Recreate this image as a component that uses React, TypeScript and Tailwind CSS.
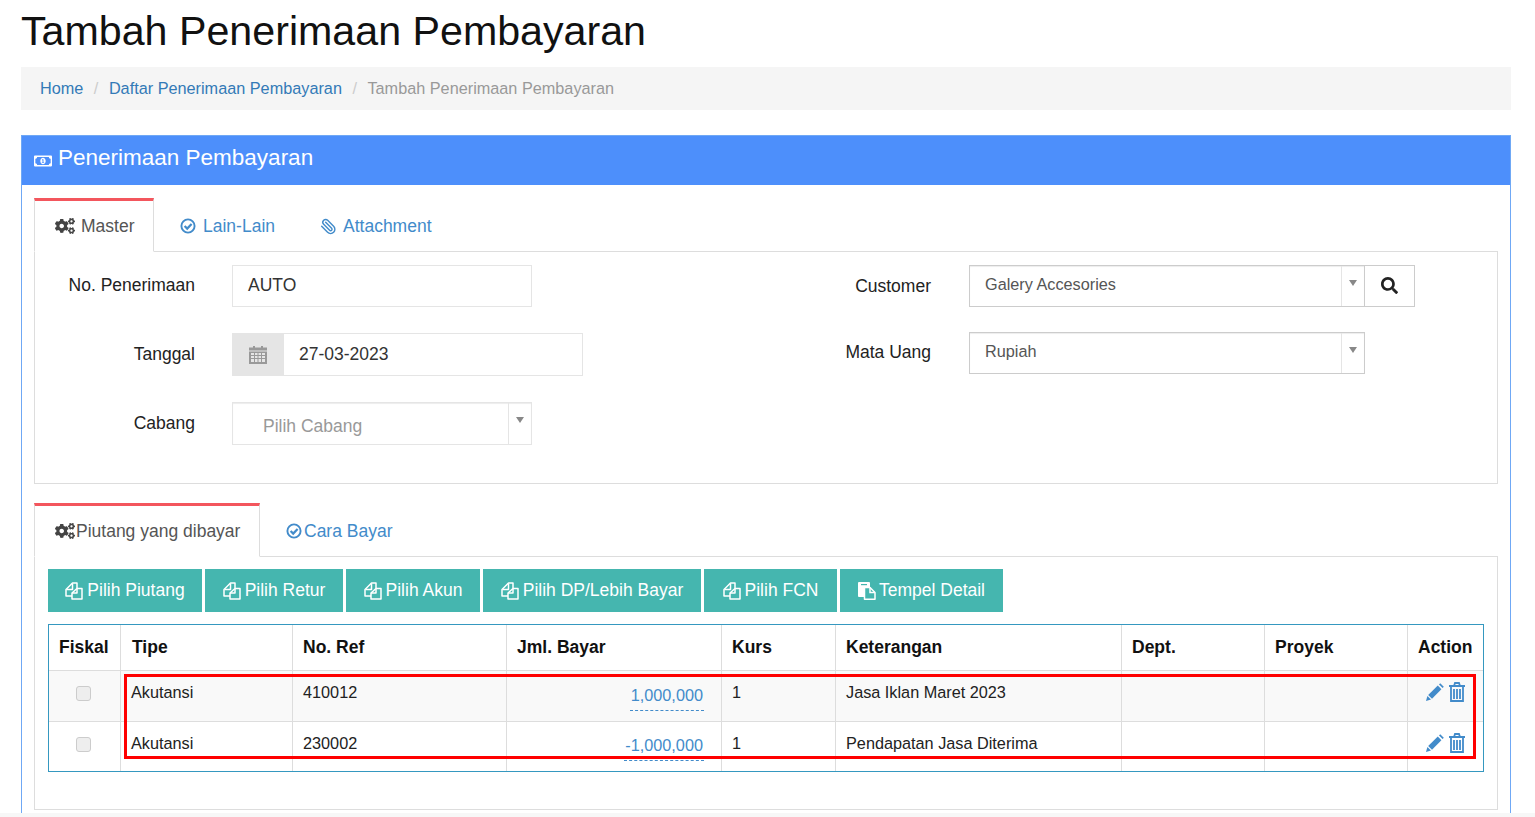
import type { ReactNode } from 'react';
import { Paperclip } from 'lucide-react';
import { FaCogs, FaRegMoneyBillAlt, FaSearch } from 'react-icons/fa';

function FilesIcon() {
  return (
    <svg viewBox="0 0 18 18" className="h-[18px] w-[18px] shrink-0" fill="none" stroke="currentColor" strokeWidth="1.5" strokeLinejoin="round" aria-hidden>
      <path d="M12 6 V1 H7.5 L1 7.5 V14 H7" />
      <path d="M7.5 1.5 V7.5 H1.5" />
      <path d="M12 6.5 H17 V17 H7 V11 Z" />
      <path d="M12 6.5 V11 H7" />
    </svg>
  );
}

function PasteIcon() {
  return (
    <svg viewBox="0 0 18 18" className="h-[18px] w-[18px] shrink-0" aria-hidden>
      <path d="M1 0 H11 A1 1 0 0 1 12 1 V15 H1 A1 1 0 0 1 0 14 V1 A1 1 0 0 1 1 0 Z" fill="#fff" />
      <rect x="3" y="2" width="6" height="1.2" fill="#45b6af" />
      <path d="M6.5 5.5 H12 L17 10.5 V17.2 H6.5 Z" fill="#45b6af" stroke="#fff" strokeWidth="1.5" strokeLinejoin="round" />
      <path d="M12 5.5 V10.5 H17" fill="none" stroke="#fff" strokeWidth="1.5" />
    </svg>
  );
}

function CheckCircleIcon() {
  return (
    <svg viewBox="0 0 16 16" className="h-[16px] w-[16px] shrink-0" fill="none" stroke="currentColor" aria-hidden>
      <circle cx="8" cy="8" r="6.6" strokeWidth="1.9" />
      <path d="M4.6 8 L7.2 10.6 L11.6 6" strokeWidth="2.2" />
    </svg>
  );
}

function CalendarIcon() {
  return (
    <svg viewBox="0 0 18 18" className="h-[18px] w-[18px]" fill="#999" aria-hidden>
      <rect x="4" y="0" width="2" height="3" />
      <rect x="12" y="0" width="2" height="3" />
      <rect x="0" y="1.5" width="18" height="3" />
      <path fillRule="evenodd" d="M0 5.5 H18 V18 H0 Z M2 7 H5 V9 H2 Z M6 7 H8.5 V9 H6 Z M9.5 7 H12 V9 H9.5 Z M13 7 H16 V9 H13 Z M2 10 H5 V12 H2 Z M6 10 H8.5 V12 H6 Z M9.5 10 H12 V12 H9.5 Z M13 10 H16 V12 H13 Z M2 13 H5 V16 H2 Z M6 13 H8.5 V16 H6 Z M9.5 13 H12 V16 H9.5 Z M13 13 H16 V16 H13 Z" />
    </svg>
  );
}

function PencilIcon() {
  return (
    <svg viewBox="0 0 18 18" className="h-[18px] w-[18px]" fill="currentColor" aria-hidden>
      <path d="M0 18 L1.4 13 L5 16.6 Z" />
      <path d="M2.2 12 L11.8 2.6 L15.4 6.2 L6 15.8 Z" />
      <path d="M13 1.4 L14.2 0.2 L17.8 3.8 L16.6 5 Z" />
    </svg>
  );
}

function TrashIcon() {
  return (
    <svg viewBox="0 0 16 20" className="h-[20px] w-[16px]" fill="none" stroke="currentColor" strokeWidth="1.8" aria-hidden>
      <path d="M0 4 H16 M5 4 L6 1 H10 L11 4" />
      <path d="M2 4.5 V19 H14 V4.5" />
      <path d="M5 7 V17 M8 7 V17 M11 7 V17" />
    </svg>
  );
}

function Caret() {
  return <span className="h-0 w-0 border-x-[4px] border-t-[6px] border-x-transparent border-t-[#888]" />;
}

function Select({ value, className, textClass }: { value: string; className: string; textClass: string }) {
  return (
    <div className={`flex shrink-0 border border-[#ccc] bg-white shadow-[inset_0_1px_1px_rgba(0,0,0,0.075)] ${className}`}>
      <div className={`flex flex-1 items-center ${textClass}`}>{value}</div>
      <div className="flex w-[23px] justify-center border-l border-[#e5e5e5] pt-[14px]">
        <Caret />
      </div>
    </div>
  );
}

function Field({ label, children, width, labelClass = '' }: { label: string; children: ReactNode; width: string; labelClass?: string }) {
  return (
    <div className="flex items-center">
      <label className={`text-right text-[17.5px] text-[#222] ${width} ${labelClass}`}>{label}</label>
      {children}
    </div>
  );
}

const buttons = [
  { label: 'Pilih Piutang', width: 'w-[154px]' },
  { label: 'Pilih Retur', width: 'w-[138px]' },
  { label: 'Pilih Akun', width: 'w-[134px]' },
  { label: 'Pilih DP/Lebih Bayar', width: 'w-[218px]' },
  { label: 'Pilih FCN', width: 'w-[133px]' },
];

const columns = ['Fiskal', 'Tipe', 'No. Ref', 'Jml. Bayar', 'Kurs', 'Keterangan', 'Dept.', 'Proyek', 'Action'];

const rows = [
  { tipe: 'Akutansi', ref: '410012', amount: '1,000,000', kurs: '1', note: 'Jasa Iklan Maret 2023', height: 'h-[51px]', amountPad: 'pt-[12px]' },
  { tipe: 'Akutansi', ref: '230002', amount: '-1,000,000', kurs: '1', note: 'Pendapatan Jasa Diterima', height: 'h-[49px]', amountPad: 'pt-[11px]' },
];

export default function App() {
  return (
    <div className="relative h-[817px] overflow-hidden bg-white pl-[21px] pr-[24px] pt-[8px] font-['Liberation_Sans',Arial,sans-serif] text-[#333]">
      <h1 className="h-[59px] text-[41.2px] leading-[46px] text-[#111]">Tambah Penerimaan Pembayaran</h1>

      <nav className="flex h-[43px] items-center gap-[10.5px] bg-[#f5f5f5] pl-[19px] text-[16.25px]">
        <a className="text-[#337ab7]">Home</a>
        <span className="text-[#ccc]">/</span>
        <a className="text-[#337ab7]">Daftar Penerimaan Pembayaran</a>
        <span className="text-[#ccc]">/</span>
        <span className="text-[#999]">Tambah Penerimaan Pembayaran</span>
      </nav>

      <section className="mt-[25px] border-x border-t border-[#6fa8f5] pb-[40px]">
        <header className="flex h-[49px] items-center gap-[6px] bg-[#4d8ffb] pb-[5px] pl-[12px] text-[22.5px] text-white">
          <FaRegMoneyBillAlt className="mt-[6px] h-[18px] w-[18px]" />
          Penerimaan Pembayaran
        </header>

        <div className="px-[12px] pt-[13px]">
          <div className="flex h-[54px] border-b border-[#ddd] text-[17.5px]">
            <div className="flex h-[54px] w-[120px] items-center gap-[6px] border-x border-b border-t-[3px] border-[#ddd] border-t-[#f3565d] border-b-white bg-white pl-[20px] text-[#555]">
              <FaCogs className="h-[20px] w-[20px] text-[#444]" />
              Master
            </div>
            <div className="flex items-center gap-[7px] pl-[26px] pt-[3px] text-[#428bca]">
              <CheckCircleIcon />
              Lain-Lain
            </div>
            <div className="flex items-center gap-[6px] pl-[45px] pt-[3px] text-[#428bca]">
              <Paperclip className="h-[17px] w-[17px] -scale-x-100" strokeWidth={2} />
              Attachment
            </div>
          </div>

          <div className="flex h-[232px] border-x border-b border-[#ddd] pt-[13px]">
            <div className="flex w-[731px] flex-col gap-[26px]">
              <Field label="No. Penerimaan" width="w-[160px]" labelClass="pb-[1px]">
                <div className="ml-[37px] flex h-[42px] w-[300px] items-center border border-[#e5e5e5] pb-[1px] pl-[15px] text-[17.5px]">AUTO</div>
              </Field>
              <Field label="Tanggal" width="w-[160px]">
                <div className="ml-[37px] flex h-[43px] w-[351px] border border-[#e5e5e5]">
                  <div className="flex w-[51px] items-center justify-center bg-[#e5e5e5] pr-[2px]">
                    <CalendarIcon />
                  </div>
                  <div className="flex items-center pl-[15px] text-[17.5px]">27-03-2023</div>
                </div>
              </Field>
              <Field label="Cabang" width="w-[160px]">
                <Select
                  value="Pilih Cabang"
                  className="ml-[37px] h-[43px] w-[300px] border-[#e5e5e5]"
                  textClass="pl-[30px] pt-[6px] text-[17.5px] text-[#999]"
                />
              </Field>
            </div>
            <div className="flex flex-col gap-[25px]">
              <Field label="Customer" width="w-[165px]">
                <Select value="Galery Accesories" className="ml-[38px] h-[42px] w-[396px]" textClass="pb-[3px] pl-[15px] text-[16.25px] text-[#555]" />
                <div className="flex h-[42px] w-[50px] items-center justify-center border border-l-0 border-[#ccc] pb-[2px]">
                  <FaSearch className="h-[17px] w-[17px] text-[#222]" />
                </div>
              </Field>
              <Field label="Mata Uang" width="w-[165px]" labelClass="pb-[1px]">
                <Select value="Rupiah" className="ml-[38px] h-[42px] w-[396px]" textClass="pb-[3px] pl-[15px] text-[16.25px] text-[#555]" />
              </Field>
            </div>
          </div>

          <div className="mt-[19px] flex h-[54px] border-b border-[#ddd] text-[17.5px]">
            <div className="flex h-[54px] w-[226px] items-center gap-[1px] border-x border-b border-t-[3px] border-[#ddd] border-t-[#f3565d] border-b-white bg-white pl-[20px] text-[#555]">
              <FaCogs className="h-[20px] w-[20px] text-[#444]" />
              Piutang yang dibayar
            </div>
            <div className="flex items-center gap-[2px] pl-[26px] pt-[3px] text-[#428bca]">
              <CheckCircleIcon />
              Cara Bayar
            </div>
          </div>

          <div className="h-[253px] border-x border-b border-[#ddd] px-[13px] pt-[12px]">
            <div className="flex gap-[3px] text-[17.5px] text-white">
              {buttons.map((button) => (
                <button key={button.label} type="button" className={`flex h-[43px] items-center justify-center gap-[4px] bg-[#45b6af] ${button.width}`}>
                  <FilesIcon />
                  {button.label}
                </button>
              ))}
              <button type="button" className="flex h-[43px] w-[163px] items-center justify-center gap-[3px] bg-[#45b6af]">
                <PasteIcon />
                Tempel Detail
              </button>
            </div>

            <div className="relative mt-[12px] w-[1436px] border border-[#3598c0]">
              <table className="w-[1434px] table-fixed border-separate border-spacing-0 text-[16.25px] text-[#222]">
                <colgroup>
                  <col className="w-[72px]" />
                  <col className="w-[172px]" />
                  <col className="w-[214px]" />
                  <col className="w-[215px]" />
                  <col className="w-[114px]" />
                  <col className="w-[286px]" />
                  <col className="w-[143px]" />
                  <col className="w-[143px]" />
                  <col className="w-[75px]" />
                </colgroup>
                <thead>
                  <tr className="h-[46px]">
                    {columns.map((column) => (
                      <th key={column} className="border-b border-r border-[#ddd] px-[10px] text-left text-[17.5px] font-bold text-[#111] last:border-r-0 [&:nth-child(2)]:pl-[11px]">
                        {column}
                      </th>
                    ))}
                  </tr>
                </thead>
                <tbody>
                  {rows.map((row, index) => (
                    <tr key={row.ref} className={`${row.height} ${index === 0 ? 'bg-[#f9f9f9]' : ''}`}>
                      <td className={`border-r border-[#ddd] pr-[2px] align-top ${index === 0 ? 'border-b' : ''}`}>
                        <div className="mx-auto mt-[15px] h-[15px] w-[15px] rounded-[3px] border border-[#ccc] bg-[#eee]" />
                      </td>
                      <td className={`border-r border-[#ddd] px-[10px] pt-[9px] align-top ${index === 0 ? 'border-b' : ''}`}>{row.tipe}</td>
                      <td className={`border-r border-[#ddd] px-[10px] pt-[9px] align-top ${index === 0 ? 'border-b' : ''}`}>{row.ref}</td>
                      <td className={`border-r border-[#ddd] pr-[17px] text-right align-top ${row.amountPad} ${index === 0 ? 'border-b' : ''}`}>
                        <span className="inline-block border-b border-dashed border-[#428bca] px-px pb-[5px] leading-[19px] text-[#428bca]">{row.amount}</span>
                      </td>
                      <td className={`border-r border-[#ddd] px-[10px] pt-[9px] align-top ${index === 0 ? 'border-b' : ''}`}>{row.kurs}</td>
                      <td className={`border-r border-[#ddd] px-[10px] pt-[9px] align-top ${index === 0 ? 'border-b' : ''}`}>{row.note}</td>
                      <td className={`border-r border-[#ddd] align-top ${index === 0 ? 'border-b' : ''}`} />
                      <td className={`border-r border-[#ddd] align-top ${index === 0 ? 'border-b' : ''}`} />
                      <td className={`align-top ${index === 0 ? 'border-b border-[#ddd]' : ''}`}>
                        <div className="flex items-center gap-[5px] pl-[18px] pt-[11px] text-[#428bca]">
                          <PencilIcon />
                          <TrashIcon />
                        </div>
                      </td>
                    </tr>
                  ))}
                </tbody>
              </table>
              <div className="pointer-events-none absolute left-[75px] top-[49px] h-[85px] w-[1352px] border-[3px] border-[#f00]" />
            </div>
          </div>
        </div>
      </section>

      <div className="absolute inset-x-0 bottom-0 h-[4px] bg-[#f7f7f7]" />
    </div>
  );
}
